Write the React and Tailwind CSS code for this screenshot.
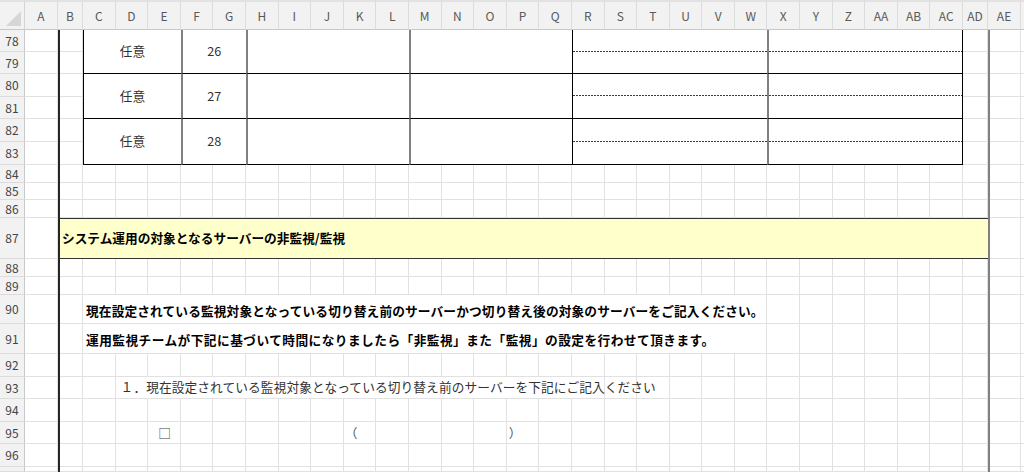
const COLS = [
  "A", "B", "C", "D", "E", "F", "G", "H", "I", "J", "K", "L", "M", "N", "O", "P",
  "Q", "R", "S", "T", "U", "V", "W", "X", "Y", "Z", "AA", "AB", "AC", "AD", "AE",
];
const ROWS = [78, 79, 80, 81, 82, 83, 84, 85, 86, 87, 88, 89, 90, 91, 92, 93, 94, 95, 96, 97];

const GRID =
  "grid w-[1024px] h-[472px] grid-cols-[25px_33px_25px_repeat(27,32.6px)_25px_33px_1fr] grid-rows-[30px_22px_22px_23px_22px_23px_23px_18px_17px_18px_41px_18px_18px_29px_30px_23px_22px_23px_22px_23px_1fr]";

const tableRows = [
  { n: 26, row: "row-start-2" },
  { n: 27, row: "row-start-4" },
  { n: 28, row: "row-start-6" },
];

const Dotted = () => (
  <div className="flex-1 flex items-end">
    <div className="h-px w-full bg-[linear-gradient(to_right,#3a3a3a_66%,transparent_66%)] bg-[length:3px_1px] bg-repeat-x" />
  </div>
);

const SheetBase = () => (
  <div className={`${GRID} col-start-1 row-start-1`}>
    {/* header row */}
    <div className="bg-[#f2f2f2] border-t-2 border-t-[#e2e2e2] border-r border-r-[#d4d4d4] border-b border-b-[#c8c8c8] flex items-end justify-end p-[3px]">
      <svg width="15" height="15" viewBox="0 0 15 15">
        <polygon points="15,0 15,15 0,15" fill="#d6d6d6" />
      </svg>
    </div>
    {COLS.map((c) => (
      <div
        key={c}
        className="bg-[#f2f2f2] border-t-2 border-t-[#e2e2e2] border-r border-r-[#dcdcdc] border-b border-b-[#c8c8c8] flex items-center justify-center text-[12px] text-[#595959]"
      >
        {c}
      </div>
    ))}
    <div className="bg-[#f2f2f2] border-t-2 border-t-[#e2e2e2] border-b border-b-[#c8c8c8]" />

    {/* body */}
    {ROWS.map((r) => (
      <div key={r} className="contents">
        <div className="bg-[#f2f2f2] border-r border-r-[#c8c8c8] border-b border-b-[#dcdcdc] flex items-center justify-center text-[12px] text-[#444] overflow-hidden">
          {r < 97 ? r : ""}
        </div>
        {COLS.map((c) => (
          <div key={c} className="bg-white border-r border-b border-[#e1e1e1]" />
        ))}
        <div className="bg-white border-b border-[#e1e1e1]" />
      </div>
    ))}
  </div>
);

const SheetContent = () => (
  <div className={`${GRID} col-start-1 row-start-1`}>
    {tableRows.map((t) => (
      <div key={t.n} className="contents">
        <div className={`${t.row} col-start-4 col-span-3 row-span-2 bg-white border-l border-b border-black flex items-center justify-center text-[#333]`}>
          任意
        </div>
        <div className={`${t.row} col-start-7 col-span-2 row-span-2 bg-white border-l-2 border-l-[#808080] border-b border-b-black flex items-center justify-center text-[#333]`}>
          {t.n}
        </div>
        <div className={`${t.row} col-start-9 col-span-5 row-span-2 bg-white border-l-2 border-l-[#808080] border-b border-b-black`} />
        <div className={`${t.row} col-start-14 col-span-5 row-span-2 bg-white border-l-2 border-l-[#808080] border-b border-b-black`} />
        <div className={`${t.row} col-start-19 col-span-6 row-span-2 bg-white border-l border-l-black border-b border-b-black flex flex-col`}>
          <Dotted />
          <div className="flex-1" />
        </div>
        <div className={`${t.row} col-start-25 col-span-6 row-span-2 bg-white border-l-2 border-l-[#808080] border-r border-r-black border-b border-b-black flex flex-col`}>
          <Dotted />
          <div className="flex-1" />
        </div>
      </div>
    ))}

    <div className="col-start-3 col-span-29 row-start-11 bg-[#ffffcc] border-y border-[#333] flex items-center pl-[4px] font-bold text-black whitespace-nowrap">
      システム運用の対象となるサーバーの非監視/監視
    </div>

    <div className="col-start-4 col-span-21 row-start-14 bg-white border-r border-b border-[#e1e1e1] flex items-center pl-[3px] pt-[4px] font-bold text-black whitespace-nowrap tracking-[0.13px]">
      現在設定されている監視対象となっている切り替え前のサーバーかつ切り替え後の対象のサーバーをご記入ください。
    </div>
    <div className="col-start-4 col-span-21 row-start-15 bg-white border-r border-b border-[#e1e1e1] flex items-center pl-[3px] pt-[4px] font-bold text-black whitespace-nowrap tracking-[0.45px]">
      運用監視チームが下記に基づいて時間になりましたら「非監視」また「監視」の設定を行わせて頂きます。
    </div>

    <div className="col-start-5 col-span-15 row-start-17 bg-white border-r border-b border-[#e1e1e1] flex items-center pl-[5px] text-[#333] whitespace-nowrap tracking-[0.1px]">
      １．現在設定されている監視対象となっている切り替え前のサーバーを下記にご記入ください
    </div>

    <div className="col-start-6 row-start-19 flex items-center justify-center text-[#444]">□</div>
    <div className="col-start-12 row-start-19 flex items-center pl-[1px] text-[#555]">（</div>
    <div className="col-start-17 row-start-19 flex items-center pl-[2px] text-[#555]">）</div>

    {/* outer frame lines */}
    <div className="col-start-3 row-start-2 row-span-20 border-l-2 border-[#262626]" />
    <div className="col-start-32 row-start-2 row-span-20 border-l-2 border-[#808080]" />
  </div>
);

export default function App() {
  return (
    <div className="w-[1024px] h-[472px] overflow-hidden bg-white text-[12.7px] leading-none font-['Noto_Sans_CJK_JP',sans-serif]">
      <div className="grid">
        <SheetBase />
        <SheetContent />
      </div>
    </div>
  );
}
